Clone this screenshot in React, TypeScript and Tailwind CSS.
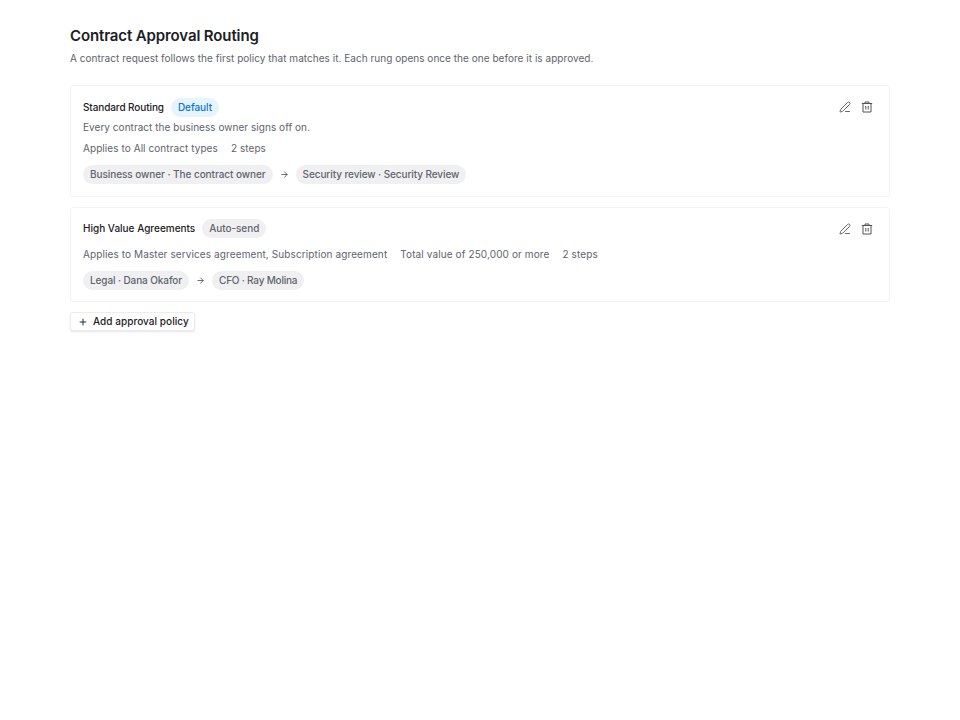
import { PenLine, Plus, ArrowRight } from "lucide-react";

function Pill({ children, tracking = "tracking-[-0.06px]" }: { children: React.ReactNode; tracking?: string }) {
  return <span className={`inline-flex h-[19px] items-center rounded-full bg-[#f0f0f3] px-[7px] text-[10px] font-medium text-[#60646c] ${tracking}`}>{children}</span>;
}

function Actions() {
  return (
    <div className="mr-[4px] flex items-center gap-[10px] text-[#50545c]">
      <PenLine size={12} strokeWidth={1.75} />
      <svg width="12" height="12" viewBox="0 0 12 12" fill="none" stroke="currentColor" strokeWidth="1">
        <path d="M0.8 2.5H11.2" />
        <path d="M4 2.5V1H8V2.5" />
        <path d="M2 2.5V11H10V2.5" />
        <path d="M4.8 5V8.5M7.2 5V8.5" />
      </svg>
    </div>
  );
}

export default function App() {
  return (
    <div className="min-h-[720px] bg-white px-[70px] pt-[26px] [font-family:Inter,sans-serif] [text-rendering:optimizeSpeed]">
      <h1 className="text-[15px] leading-[20px] font-semibold tracking-[-0.12px] text-[#1c2024]">Contract Approval Routing</h1>
      <p className="mt-[5px] text-[10px] leading-[14px] tracking-[0.035px] text-[#60646c]">A contract request follows the first policy that matches it. Each rung opens once the one before it is approved.</p>

      <div className="mt-[20px] flex flex-col gap-[10px]">
        <div className="rounded-[3px] border border-[#f3f3f5] px-3 pt-3 pb-[12px]">
          <div className="flex items-start justify-between">
            <div className="flex items-center gap-[7px]">
              <span className="text-[10px] font-medium tracking-[-0.1px] text-[#1c2024]">Standard Routing</span>
              <span className="inline-flex h-[19px] items-center rounded-full bg-[#e6f4fe] px-[7px] text-[10px] font-medium tracking-[-0.06px] text-[#0d74ce]">Default</span>
            </div>
            <div className="mt-[3px]"><Actions /></div>
          </div>
          <p className="mt-[3px] text-[10px] leading-[14px] tracking-[0.04px] text-[#60646c]">Every contract the business owner signs off on.</p>
          <div className="mt-[7px] flex gap-[13px] text-[10px] leading-[14px] tracking-[0.07px] text-[#60646c]">
            <span>Applies to All contract types</span>
            <span>2 steps</span>
          </div>
          <div className="mt-[10px] flex items-center gap-[7px]">
            <Pill>Business owner · The contract owner</Pill>
            <ArrowRight size={9} className="text-[#40444c]" />
            <Pill tracking="tracking-[-0.09px]">Security review · Security Review</Pill>
          </div>
        </div>

        <div className="rounded-[3px] border border-[#f3f3f5] px-3 pt-[11px] pb-[11px]">
          <div className="flex items-start justify-between">
            <div className="flex items-center gap-[7px]">
              <span className="text-[10px] font-medium text-[#1c2024]">High Value Agreements</span>
              <Pill>Auto-send</Pill>
            </div>
            <div className="mt-[4px]"><Actions /></div>
          </div>
          <div className="mt-[9px] flex gap-[13px] text-[10px] leading-[14px] tracking-[0.11px] text-[#60646c]">
            <span>Applies to Master services agreement, Subscription agreement</span>
            <span>Total value of 250,000 or more</span>
            <span>2 steps</span>
          </div>
          <div className="mt-[10px] flex items-center gap-[7px]">
            <Pill tracking="tracking-[-0.1px]">Legal · Dana Okafor</Pill>
            <ArrowRight size={9} className="text-[#40444c]" />
            <Pill tracking="tracking-[-0.2px]">CFO · Ray Molina</Pill>
          </div>
        </div>
      </div>

      <button className="mt-[10px] flex h-[19px] items-center gap-[5px] rounded-[3px] border border-[#ececef] bg-white pr-[5px] pl-[7px] text-[10px] font-medium tracking-[0.05px] text-[#1c2024] shadow-[0_1px_2px_rgba(0,0,0,0.1)]">
        <Plus size={10} strokeWidth={2.25} />
        Add approval policy
      </button>
    </div>
  );
}
